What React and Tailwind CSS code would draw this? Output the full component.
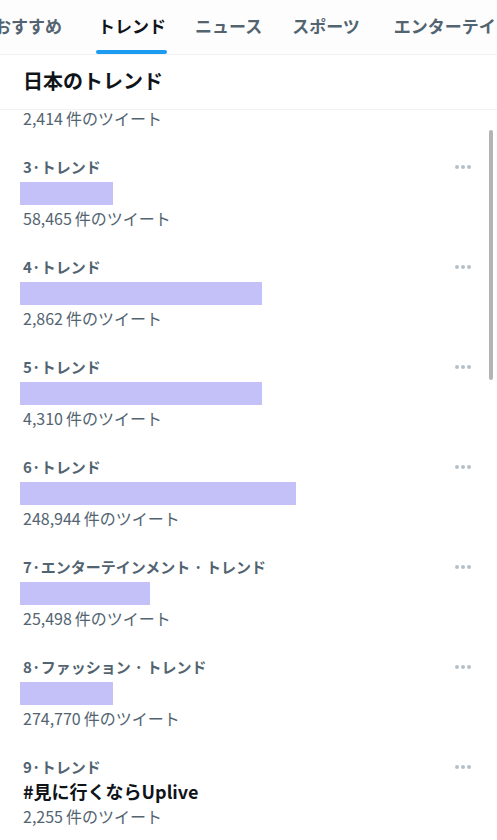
import React from 'react';

const font = { fontFamily: '"Noto Sans CJK JP", "Noto Sans", sans-serif' };

const trends = [
  { rank: 3, category: 'トレンド', bar: 93, count: '58,465' },
  { rank: 4, category: 'トレンド', bar: 242, count: '2,862' },
  { rank: 5, category: 'トレンド', bar: 242, count: '4,310' },
  { rank: 6, category: 'トレンド', bar: 276, count: '248,944' },
  { rank: 7, category: 'エンターテインメント · トレンド', bar: 130, count: '25,498' },
  { rank: 8, category: 'ファッション · トレンド', bar: 93, count: '274,770' },
  { rank: 9, category: 'トレンド', title: '#見に行くならUplive', count: '2,255' },
];

const Dots = () => (
  <svg width="18" height="6" viewBox="0 0 18 6" className="mt-[7px]">
    <circle cx="3" cy="3" r="2" fill="#b6c0c9" />
    <circle cx="9" cy="3" r="2" fill="#b6c0c9" />
    <circle cx="15" cy="3" r="2" fill="#b6c0c9" />
  </svg>
);

const Count = ({ value }) => (
  <div className="text-[16px] leading-[20px] text-[#536471]">
    <span className="mr-[3px]">{value}</span>件のツイート
  </div>
);

const TrendRow = ({ item }) => (
  <div className="flex items-start justify-between pl-[23px] pr-[25px] pt-[14px] pb-[15px]">
    <div className="flex flex-col">
      <div className="text-[15px] leading-[20px] font-bold text-[#536471]">
        {item.rank}·{item.category}
      </div>
      {item.title ? (
        <div className="mb-[1px] text-[18px] leading-[28px] font-bold text-[#0f1419]">{item.title}</div>
      ) : (
        <div className="-ml-[3px] mt-[5px] mb-[3px] h-[23px] bg-[#c4c0f8]" style={{ width: `${item.bar}px` }}></div>
      )}
      <Count value={item.count} />
    </div>
    <Dots />
  </div>
);

const tabs = [
  { label: 'おすすめ', cls: '-ml-[6px]' },
  { label: 'トレンド', cls: 'ml-[36px]', active: true },
  { label: 'ニュース', cls: 'ml-[29px]' },
  { label: 'スポーツ', cls: 'ml-[30px]' },
  { label: 'エンターテインメント', cls: 'ml-[34px]' },
];

export default function App() {
  return (
    <div className="relative w-[497px] h-[840px] overflow-hidden bg-white" style={font}>
      {/* Tabs */}
      <div className="flex h-[55px] border-b border-[#eff3f4] bg-[#fdfdfd] whitespace-nowrap">
        {tabs.map((t) => (
          <div key={t.label} className={`relative shrink-0 flex items-center ${t.cls}`}>
            <span className={`text-[17px] font-bold leading-[24px] -mt-[2px] ${t.active ? 'text-[#0f1419]' : 'text-[#536471]'}`}>
              {t.label}
            </span>
            {t.active ? (
              <div className="absolute left-[-2px] right-[-1px] bottom-[0px] h-[4px] rounded-full bg-[#1d9bf0]"></div>
            ) : null}
          </div>
        ))}
      </div>

      {/* Header */}
      <div className="h-[55px] flex items-center pl-[23px] border-b border-[#eff3f4]">
        <h2 className="text-[20px] font-bold text-[#0f1419] leading-[28px] -mt-[2px]">日本のトレンド</h2>
      </div>

      {/* Partial previous row */}
      <div className="pl-[23px] -mt-[2px]">
        <Count value="2,414" />
      </div>
      <div className="h-[15px]"></div>

      {trends.map((item) => (
        <TrendRow key={item.rank} item={item} />
      ))}

      {/* Scrollbar */}
      <div className="absolute left-[489px] top-[130px] w-[4px] h-[250px] rounded-full bg-[#b4b4b4]"></div>
    </div>
  );
}
